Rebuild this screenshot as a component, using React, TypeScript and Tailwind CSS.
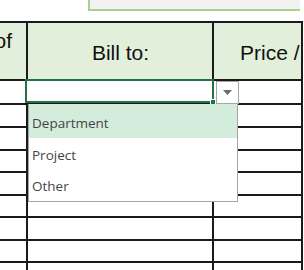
import React from "react";

const rowHeights = [24, 23, 23, 22, 23, 22, 23, 22, 22];

export default function App() {
  return (
    <div className="relative w-[304px] h-[270px] overflow-hidden bg-white" style={{ fontFamily: '"Liberation Sans", Arial, sans-serif' }}>
      {/* top box */}
      <div className="h-[21px]">
        <div className="ml-[88px] w-[212px] h-[11px] bg-[#f2f2f2] border-l-2 border-b-2 border-[#a9d08e]" />
      </div>
      {/* table */}
      <div className="w-[303px]">
        <div className="flex h-[60px] border-t-2 border-b-2 border-[#1a1a1a] bg-[#e2efda]">
          <div className="w-[28px] shrink-0 border-r-2 border-[#1a1a1a] overflow-hidden flex justify-end pr-[14px] pt-[6px]">
            <span className="text-[21px] leading-[24px] text-[#111]">of</span>
          </div>
          <div className="w-[186px] shrink-0 border-r-2 border-[#1a1a1a] flex items-center justify-center pt-[3px]">
            <span className="text-[21px] leading-[24px] text-[#111] pl-[1px]">Bill to:</span>
          </div>
          <div className="w-[89px] shrink-0 border-r-2 border-[#1a1a1a] overflow-hidden flex items-center pl-[26px] pt-[3px]">
            <span className="text-[21px] leading-[24px] text-[#111] whitespace-nowrap">Price /</span>
          </div>
        </div>
        {rowHeights.map((h, i) => (
          <div key={i} className="flex border-b-2 border-[#1a1a1a]" style={{ height: h }}>
            <div className="w-[28px] shrink-0 border-r-2 border-[#1a1a1a]" />
            <div className="w-[186px] shrink-0 border-r-2 border-[#1a1a1a]" />
            <div className="w-[89px] shrink-0 border-r-2 border-[#1a1a1a]" />
          </div>
        ))}
      </div>

      {/* selected cell */}
      <div className="absolute left-[25px] top-[79px] w-[189px] h-[24px] border-2 border-[#217346] bg-white" />
      <div className="absolute left-[210px] top-[99px] w-[6px] h-[6px] bg-[#217346] border border-white" />

      {/* dropdown button */}
      <div className="absolute left-[216px] top-[81px] w-[23px] h-[23px] border border-[#a6a6a6] bg-white flex items-center justify-center">
        <svg width="9" height="5" viewBox="0 0 9 5">
          <polygon points="0,0 9,0 4.5,5" fill="#6b6b6b" />
        </svg>
      </div>

      {/* dropdown list */}
      <div
        className="absolute left-[28px] top-[104px] w-[210px] h-[98px] bg-white border border-[#a6a6a6] border-t-0 text-[#444] text-[13.5px]"
        style={{ fontFamily: '"Open Sans", "Noto Sans", sans-serif' }}
      >
        <div className="h-[34px] bg-[#d4ecdc] flex items-center pl-[3px] pt-[5px]">Department</div>
        <div className="h-[32px] flex items-center pl-[3px] pt-[2px]">Project</div>
        <div className="h-[31px] flex items-center pl-[3px] pt-[1px]">Other</div>
      </div>
    </div>
  );
}
